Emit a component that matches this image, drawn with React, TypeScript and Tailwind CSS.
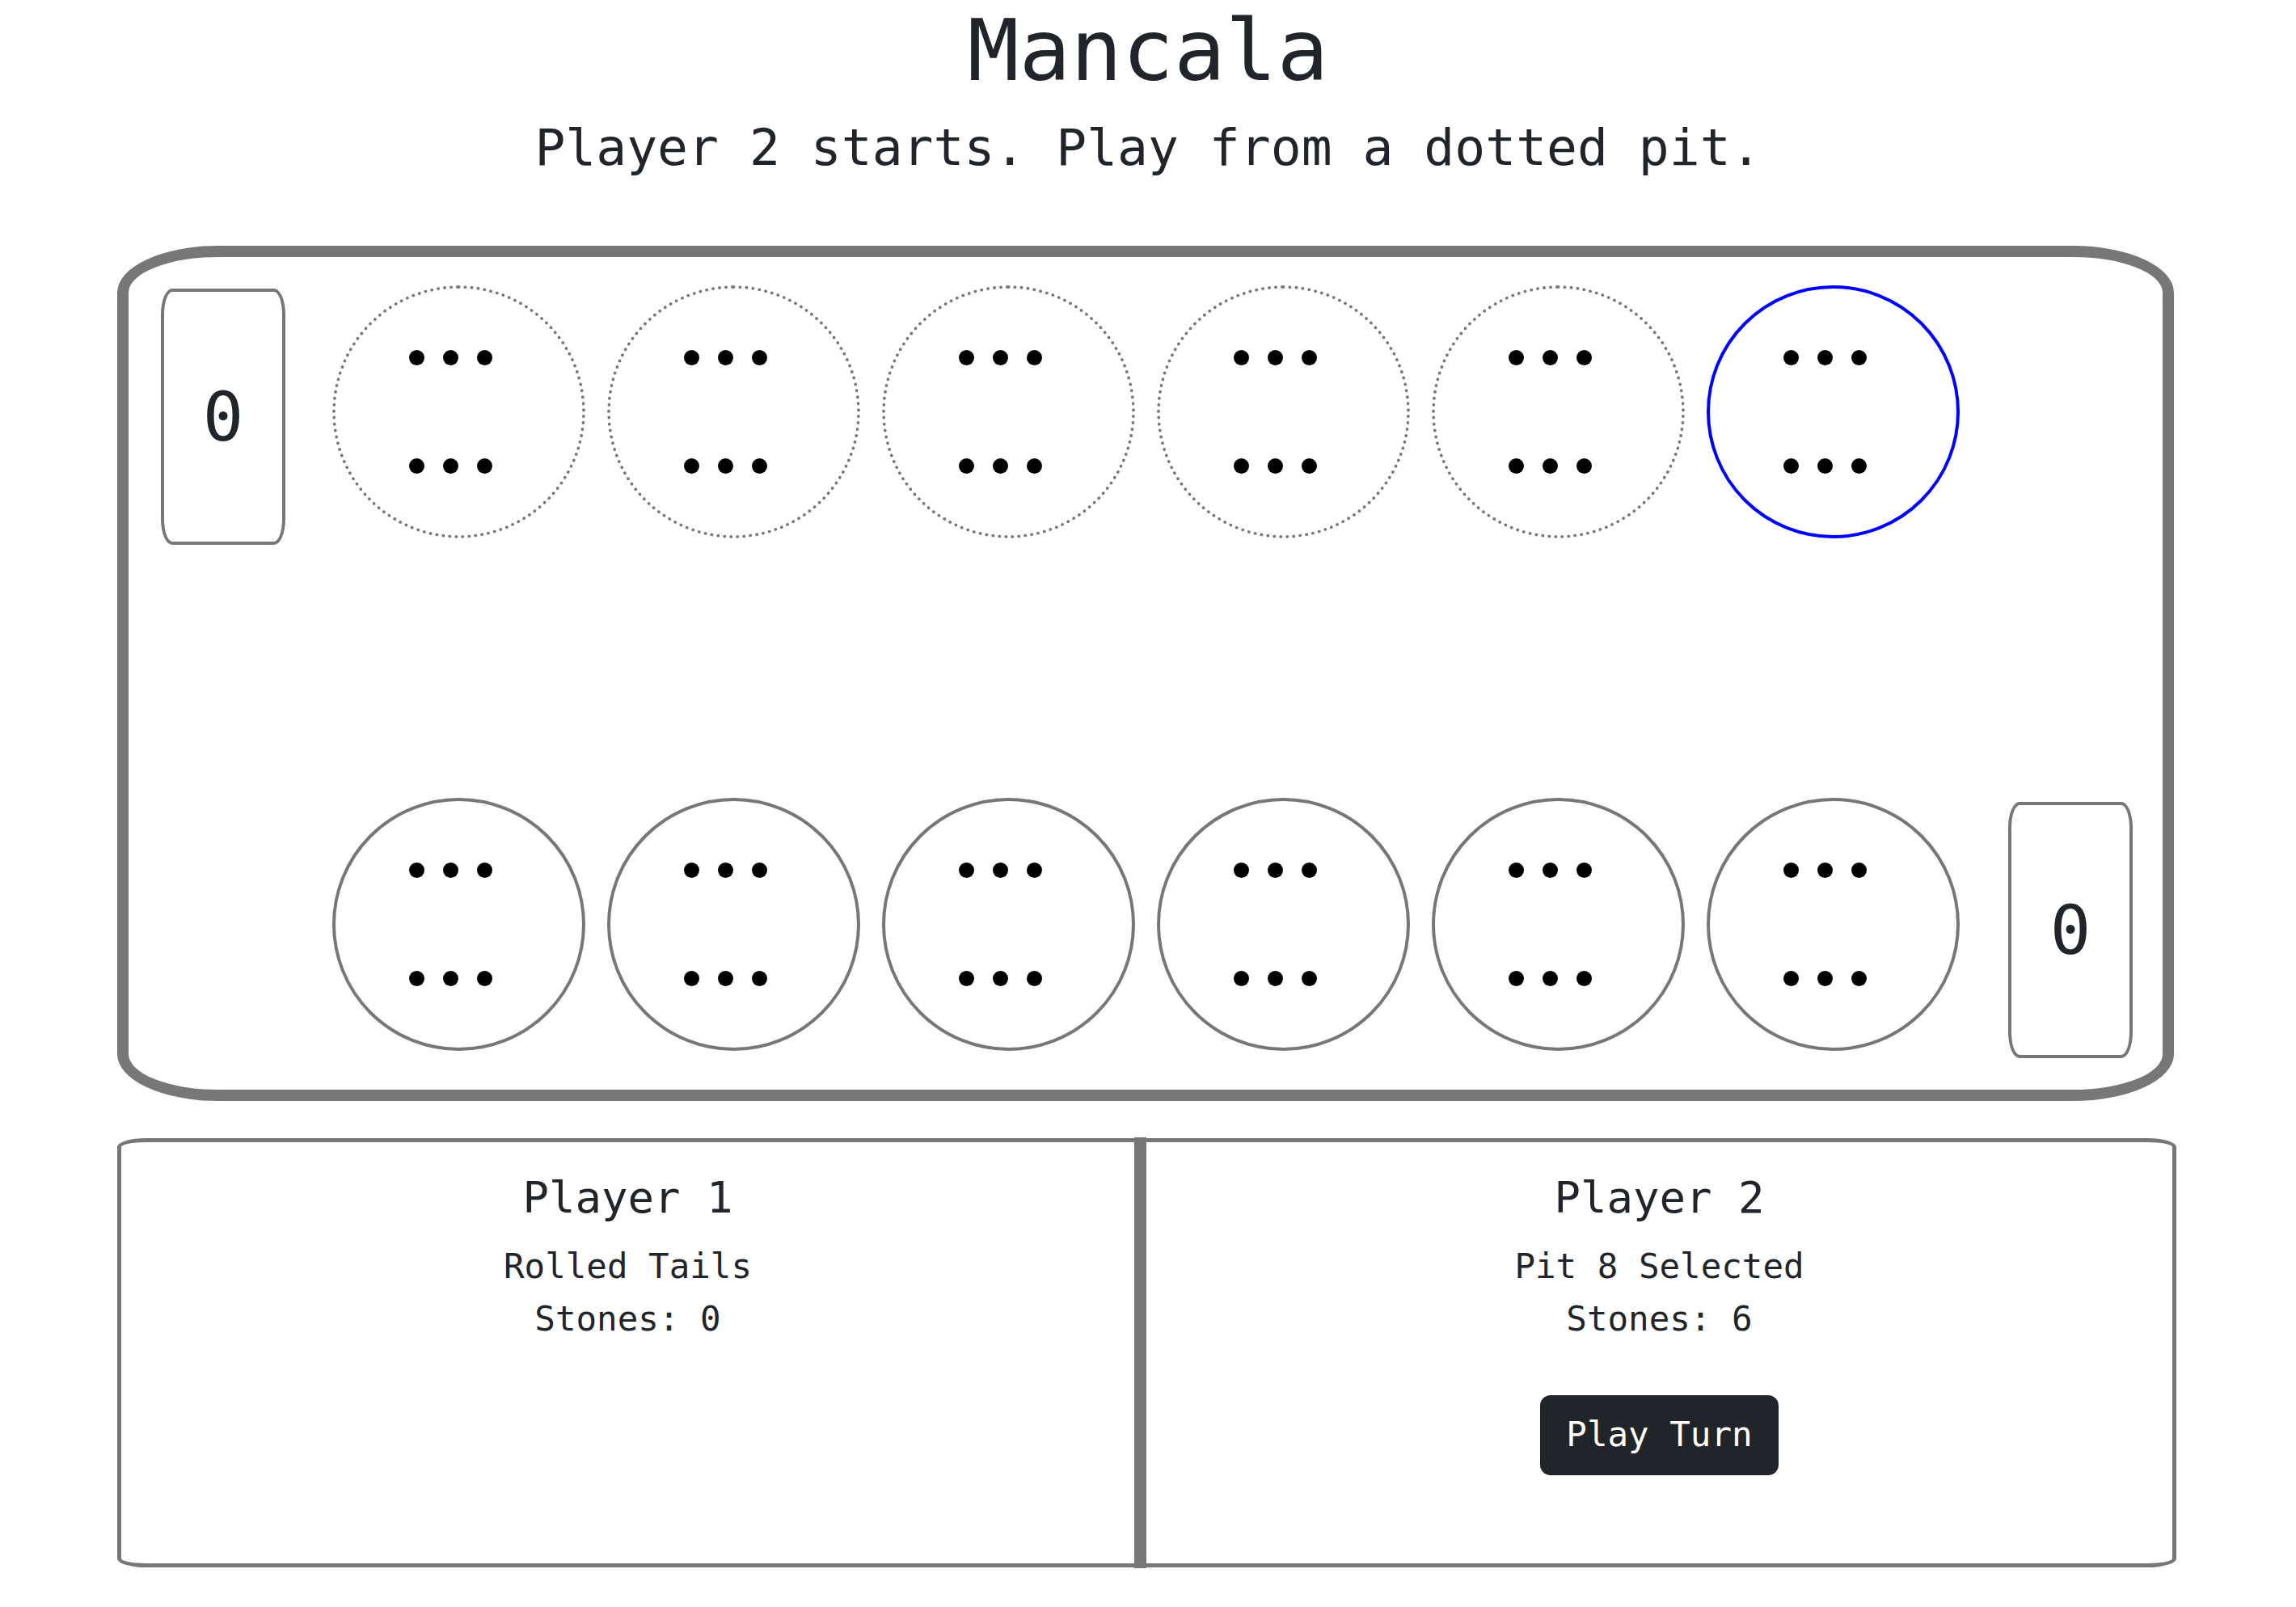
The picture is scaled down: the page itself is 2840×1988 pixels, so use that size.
import React from "react";

const mono = { fontFamily: '"DejaVu Sans Mono", "Liberation Mono", monospace' };

function Stones() {
  // two rows of three, the way the board draws a pit of six
  return (
    <div className="flex flex-col gap-[115px] pr-[21px]">
      {[0, 1].map((r) => (
        <div key={r} className="flex gap-[23px]">
          {[0, 1, 2].map((c) => (
            <div key={c} className="w-[19px] h-[19px] rounded-full bg-black" />
          ))}
        </div>
      ))}
    </div>
  );
}

function Pit({ kind }: { kind: "dotted" | "solid" | "selected" }) {
  const border =
    kind === "dotted"
      ? "border-4 border-dotted border-[#777]"
      : kind === "selected"
      ? "border-4 border-solid border-[#0000ff]"
      : "border-4 border-solid border-[#777]";
  return (
    <div className={`w-[313px] h-[313px] shrink-0 rounded-full flex items-center justify-center bg-white ${border}`}>
      <Stones />
    </div>
  );
}

function Store({ value, className }: { value: number; className?: string }) {
  return (
    <div
      className={`w-[154px] h-[317px] shrink-0 border-4 border-[#777] rounded-[14px/32px] flex items-center justify-center text-[84px] text-[#212529] ${className ?? ""}`}
    >
      {value}
    </div>
  );
}

function PlayerPanel({
  name,
  status,
  stones,
  showButton,
  className,
}: {
  name: string;
  status: string;
  stones: number;
  showButton?: boolean;
  className?: string;
}) {
  return (
    <div className={`flex flex-col items-center pt-[36px] text-[#212529] ${className ?? ""}`}>
      <h2 className="text-[54px] leading-[65px]">{name}</h2>
      <div className="mt-[21px] text-[42.5px] leading-[64.5px] text-center">
        <p>{status}</p>
        <p>Stones: {stones}</p>
      </div>
      {showButton && (
        <button className="mt-[62px] bg-[#212529] text-white text-[42.5px] leading-[64.5px] px-[32px] py-[17px] rounded-[13px]">
          Play Turn
        </button>
      )}
    </div>
  );
}

export default function App() {
  const top: ("dotted" | "selected")[] = ["dotted", "dotted", "dotted", "dotted", "dotted", "selected"];

  return (
    <div className="min-h-screen bg-white flex flex-col items-center text-[#212529]" style={mono}>
      <h1 className="text-[106px] leading-[126px] font-normal">Mancala</h1>
      <p className="mt-[9px] text-[63px] leading-[96px]">Player 2 starts. Play from a dotted pit.</p>

      <div className="mt-[73px] self-start ml-[145px] w-[2544px] h-[1058px] border-[14px] border-[#777] rounded-[125px/58px] flex flex-col justify-between pt-[35px] pb-[39px] pl-[40px]">
        <div className="flex items-start">
          <Store value={0} className="mt-[4px]" />
          <div className="ml-[58px] flex gap-[27px]">
            {top.map((k, i) => (
              <Pit key={i} kind={k} />
            ))}
          </div>
        </div>
        <div className="flex items-start">
          <div className="ml-[212px] flex gap-[27px]">
            {[0, 1, 2, 3, 4, 5].map((i) => (
              <Pit key={i} kind="solid" />
            ))}
          </div>
          <Store value={0} className="ml-[60px] mt-[5px]" />
        </div>
      </div>

      <div className="mt-[46px] mb-[40px] self-start ml-[145px] w-[2547px] h-[531px] border-[5px] border-[#777] rounded-[36px/11px] flex">
        <PlayerPanel name="Player 1" status="Rolled Tails" stones={0} className="w-[1253px]" />
        <div className="w-[15px] -my-[6px] bg-[#777]" />
        <PlayerPanel name="Player 2" status="Pit 8 Selected" stones={6} showButton className="flex-1" />
      </div>
    </div>
  );
}
